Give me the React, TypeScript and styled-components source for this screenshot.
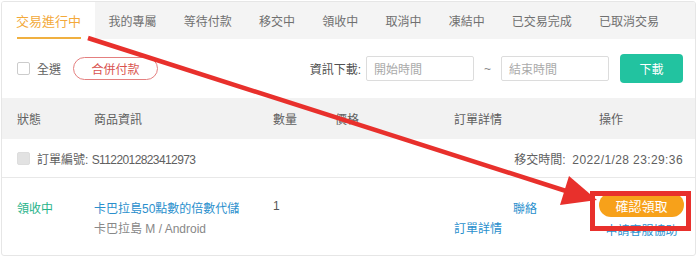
import React from 'react';
import styled, { createGlobalStyle } from 'styled-components';

const GlobalStyle = createGlobalStyle`
  html, body {
    margin: 0;
    padding: 0;
    background: #ffffff;
  }
  body {
    font-family: "Liberation Sans", "Noto Sans CJK TC", sans-serif;
    font-size: 12px;
    color: #707070;
  }
`;

const Page = styled.div`
  position: relative;
  width: 700px;
  height: 258px;
  overflow: hidden;
`;

const Card = styled.div`
  width: 695px;
  height: 255px;
  margin: 1px 0 0 1px;
  border: 1px solid #e6e6e6;
  border-radius: 3px;
  box-sizing: border-box;
  overflow: hidden;
`;

const Tabs = styled.div`
  display: flex;
  height: 37px;
  background: #f4f4f4;
`;

const Tab = styled.div<{ $active?: boolean }>`
  position: relative;
  display: flex;
  align-items: center;
  padding: 0 ${p => (p.$active ? 14 : 13.6)}px;
  font-size: ${p => (p.$active ? 13 : 12)}px;
  color: ${p => (p.$active ? '#f3a93a' : '#707070')};
  background: ${p => (p.$active ? '#fff' : 'transparent')};
  white-space: nowrap;

  &::after {
    content: '';
    display: ${p => (p.$active ? 'block' : 'none')};
    position: absolute;
    left: 15px;
    right: 14px;
    bottom: 0;
    height: 2px;
    background: #f0b040;
  }
`;

const Toolbar = styled.div`
  display: flex;
  align-items: center;
  height: 59px;
  padding: 0 12px 0 15px;
  box-sizing: border-box;
`;

const CheckBox = styled.span<{ $filled?: boolean }>`
  display: inline-block;
  width: 11px;
  height: 11px;
  border: 1px solid ${p => (p.$filled ? '#ddd' : '#ccc')};
  background: ${p => (p.$filled ? '#e2e2e2' : '#fff')};
  border-radius: 2px;
  flex: none;
`;

const Label = styled.span`
  margin-left: 7px;
  color: #606060;
`;

const OutlineButton = styled.div`
  margin-left: 12px;
  width: 85px;
  height: 23px;
  border: 1px solid #e47f7f;
  border-radius: 12px;
  color: #d9534f;
  display: flex;
  align-items: center;
  justify-content: center;
  box-sizing: border-box;
`;

const Spacer = styled.div`
  flex: 1;
`;

const FieldLabel = styled.span`
  color: #505050;
  margin-right: 5px;
`;

const DateInput = styled.div`
  width: 108px;
  height: 25px;
  border: 1px solid #dcdcdc;
  border-radius: 2px;
  box-sizing: border-box;
  padding-left: 7px;
  display: flex;
  align-items: center;
  color: #aaa;
`;

const Tilde = styled.span`
  margin: 0 10px;
  color: #888;
`;

const TealButton = styled.div`
  margin-left: 11px;
  width: 63px;
  height: 29px;
  border-radius: 4px;
  background: #22c3a0;
  color: #fff;
  display: flex;
  align-items: center;
  justify-content: center;
`;

const Grid = styled.div`
  display: grid;
  grid-template-columns: 77px 179px 62px 119px 145px 1fr;
  padding-left: 15px;
`;

const HeaderRow = styled(Grid)`
  height: 41px;
  align-items: center;
  background: #f2f2f2;
  color: #606060;
`;

const OrderRow = styled.div`
  height: 38px;
  display: flex;
  align-items: center;
  padding: 0 12px 0 15px;
  border-bottom: 1px solid #e8e8e8;
  color: #606060;
`;

const OrderNo = styled.span`
  margin-left: 7px;
`;

const Digits = styled.span<{ $spacing: number }>`
  letter-spacing: ${p => p.$spacing}px;
`;

const ItemRow = styled(Grid)`
  height: 79px;
  align-items: start;
  padding-top: 21px;
  box-sizing: border-box;
`;

const Status = styled.span`
  color: #27b48a;
`;

const Product = styled.div`
  display: flex;
  flex-direction: column;
  gap: 3px;
`;

const Link = styled.span<{ $indent?: number }>`
  color: #2a8fcd;
  margin-left: ${p => p.$indent || 0}px;
`;

const Sub = styled.span`
  color: #888;
`;

const Qty = styled.span`
  color: #555;
`;

const Detail = styled.div`
  display: flex;
  flex-direction: column;
  gap: 3px;
`;

const Actions = styled.div`
  width: 85px;
  margin-top: -6px;
  display: flex;
  flex-direction: column;
  align-items: center;
  gap: 4px;
`;

const OrangeButton = styled.div`
  width: 85px;
  height: 24px;
  border-radius: 12px;
  background: #f7a11a;
  color: #fff;
  display: flex;
  align-items: center;
  justify-content: center;
  font-size: 13px;
`;

const Overlay = styled.svg`
  position: absolute;
  left: 0;
  top: 0;
  pointer-events: none;
`;

const tabs = ['我的專屬', '等待付款', '移交中', '領收中', '取消中', '凍結中', '已交易完成', '已取消交易'];

const App: React.FC = () => {
  return (
    <Page>
      <GlobalStyle />
      <Card>
        <Tabs>
          <Tab $active>交易進行中</Tab>
          {tabs.map(t => (
            <Tab key={t}>{t}</Tab>
          ))}
        </Tabs>

        <Toolbar>
          <CheckBox />
          <Label>全選</Label>
          <OutlineButton>合併付款</OutlineButton>
          <Spacer />
          <FieldLabel>資訊下載:</FieldLabel>
          <DateInput>開始時間</DateInput>
          <Tilde>~</Tilde>
          <DateInput>結束時間</DateInput>
          <TealButton>下載</TealButton>
        </Toolbar>

        <HeaderRow>
          <span>狀態</span>
          <span>商品資訊</span>
          <span>數量</span>
          <span>價格</span>
          <span>訂單詳情</span>
          <span>操作</span>
        </HeaderRow>

        <OrderRow>
          <CheckBox $filled />
          <OrderNo>
            訂單編號: <Digits $spacing={-0.6}>S1122012823412973</Digits>
          </OrderNo>
          <Spacer />
          <span>
            移交時間:&nbsp; <Digits $spacing={0.4}>2022/1/28 23:29:36</Digits>
          </span>
        </OrderRow>

        <ItemRow>
          <Status>領收中</Status>
          <Product>
            <Link>卡巴拉島50點數的倍數代儲</Link>
            <Sub>卡巴拉島 M / Android</Sub>
          </Product>
          <Qty>1</Qty>
          <span />
          <Detail>
            <Link $indent={59}>聯絡</Link>
            <Link>訂單詳情</Link>
          </Detail>
          <Actions>
            <OrangeButton>確認領取</OrangeButton>
            <Link>申請客服協助</Link>
          </Actions>
        </ItemRow>
      </Card>

      <Overlay width="700" height="258" viewBox="0 0 700 258">
        <line x1="88" y1="38" x2="566" y2="191" stroke="#e8302c" strokeWidth="4.5" />
        <polygon points="597,200 560,205 569,176" fill="#e8302c" />
        <rect x="592.5" y="193.5" width="96" height="35" fill="none" stroke="#e8302c" strokeWidth="5" />
      </Overlay>
    </Page>
  );
};

export default App;
